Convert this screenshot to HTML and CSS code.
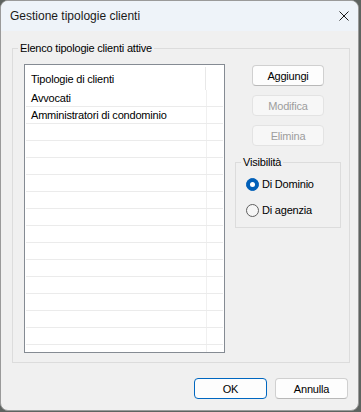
FILE: index.html
```html
<!DOCTYPE html>
<html lang="it">
    <head>
        <meta charset="UTF-8" />
        <meta name="viewport" content="width=device-width, initial-scale=1.0" />
        <link rel="stylesheet" href="styles.css">
        <title>Gestione tipologie clienti</title>
    </head>
    <body>
        <div class="window">
            <div class="titlebar">
                <span class="title">Gestione tipologie clienti</span>
                <svg class="close" width="10" height="10" viewBox="0 0 10 10">
                    <path d="M0.5 0.5 L9.5 9.5 M9.5 0.5 L0.5 9.5" stroke="#1a1a1a" stroke-width="1" fill="none" />
                </svg>
            </div>
            <div class="content">
                <fieldset class="group main-group">
                    <legend>Elenco tipologie clienti attive</legend>
                    <div class="group-body">
                        <div class="list">
                            <div class="list-head">
                                <span class="cell-name">Tipologie di clienti</span>
                            </div>
                            <div class="row"><span class="cell-name">Avvocati</span></div>
                            <div class="row"><span class="cell-name">Amministratori di condominio</span></div>
                            <div class="row"><span class="cell-name"></span></div>
                            <div class="row"><span class="cell-name"></span></div>
                            <div class="row"><span class="cell-name"></span></div>
                            <div class="row"><span class="cell-name"></span></div>
                            <div class="row"><span class="cell-name"></span></div>
                            <div class="row"><span class="cell-name"></span></div>
                            <div class="row"><span class="cell-name"></span></div>
                            <div class="row"><span class="cell-name"></span></div>
                            <div class="row"><span class="cell-name"></span></div>
                            <div class="row"><span class="cell-name"></span></div>
                            <div class="row"><span class="cell-name"></span></div>
                            <div class="row"><span class="cell-name"></span></div>
                            <div class="row"><span class="cell-name"></span></div>
                            <div class="row"><span class="cell-name"></span></div>
                        </div>
                        <div class="side">
                            <button class="btn">Aggiungi</button>
                            <button class="btn" disabled>Modifica</button>
                            <button class="btn" disabled>Elimina</button>
                            <fieldset class="group vis-group">
                                <legend>Visibilità</legend>
                                <div class="radios">
                                    <label class="radio checked"><span class="dot"></span>Di Dominio</label>
                                    <label class="radio"><span class="dot"></span>Di agenzia</label>
                                </div>
                            </fieldset>
                        </div>
                    </div>
                </fieldset>
                <div class="footer">
                    <button class="btn btn-default">OK</button>
                    <button class="btn">Annulla</button>
                </div>
            </div>
        </div>
    </body>
</html>
```

FILE: styles.css
```css
* {
    margin: 0;
    padding: 0;
    box-sizing: border-box;
}

body {
    background-color: #5e6360;
    font-family: "Liberation Sans", Arial, sans-serif;
    font-size: 11px;
    color: #000;
}

.window {
    width: 359px;
    height: 411px;
    background-color: #f0f0f0;
    border: 1px solid #9a9a9a;
    border-radius: 8px;
    overflow: hidden;
    display: flex;
    flex-direction: column;
}

.titlebar {
    height: 30px;
    flex-shrink: 0;
    background-color: #eef3f9;
    display: flex;
    align-items: center;
    justify-content: space-between;
    padding: 0 9px 0 9px;
}

.title {
    font-size: 12px;
    color: #1a1a1a;
}

.close {
    display: block;
    margin-top: -1px;
}

.content {
    padding: 11px 8px 0 11px;
}

.group {
    border: 1px solid #dcdcdc;
    padding: 0;
    margin: 0;
    min-inline-size: 0;
}

.group legend {
    margin-left: 5px;
    padding: 0 2px;
    line-height: 13px;
    letter-spacing: -0.2px;
    color: #000;
}

.group-body {
    display: flex;
    gap: 10px;
    padding: 9px 8px 9px 11px;
}

.list {
    width: 201px;
    height: 289px;
    flex-shrink: 0;
    background-color: #fff;
    border: 1px solid #858b93;
    overflow: hidden;
}

.list-head {
    height: 25px;
    display: flex;
    align-items: center;
}

.list-head .cell-name {
    width: 181px;
    height: 23px;
    margin-top: 2px;
    padding-left: 6px;
    display: flex;
    align-items: center;
    border-right: 1px solid #e8e8e8;
    letter-spacing: -0.2px;
}

.row {
    height: 17px;
    margin: 0 1px;
    border-bottom: 1px solid #ebebeb;
    display: flex;
}

.row .cell-name {
    width: 181px;
    line-height: 16px;
    padding-left: 5px;
    border-right: 1px solid #f0f0f0;
    letter-spacing: -0.2px;
    white-space: nowrap;
}

.side {
    width: 106px;
    display: flex;
    flex-direction: column;
    align-items: center;
    padding-top: 1px;
}

.btn {
    width: 72px;
    height: 21px;
    font-family: "Liberation Sans", Arial, sans-serif;
    font-size: 11px;
    letter-spacing: -0.2px;
    color: #000;
    background-color: #fdfdfd;
    border: 1px solid #d0d0d0;
    border-bottom-color: #b8b8b8;
    border-radius: 4px;
    margin-bottom: 9px;
}

.btn:disabled {
    color: #9d9d9d;
    background-color: #f7f7f7;
    border-color: #e3e3e3;
}

.vis-group {
    width: 106px;
    margin-top: 1px;
}

.radios {
    padding: 2px 0 4px 10px;
}

.radio {
    height: 26px;
    display: flex;
    align-items: center;
    gap: 3px;
    letter-spacing: -0.2px;
}

.dot {
    width: 13px;
    height: 13px;
    border-radius: 50%;
    border: 1px solid #5f5f5f;
    background-color: #f6f6f6;
    display: flex;
    align-items: center;
    justify-content: center;
}

.radio.checked .dot {
    border-color: #005fb8;
    background-color: #005fb8;
}

.radio.checked .dot::after {
    content: "";
    width: 5px;
    height: 5px;
    border-radius: 50%;
    background-color: #fff;
}

.footer {
    display: flex;
    justify-content: flex-end;
    gap: 8px;
    padding: 15px 2px 0 0;
}

.footer .btn {
    width: 73px;
    margin-bottom: 0;
}

.btn-default {
    border-color: #0067c0;
}
```
